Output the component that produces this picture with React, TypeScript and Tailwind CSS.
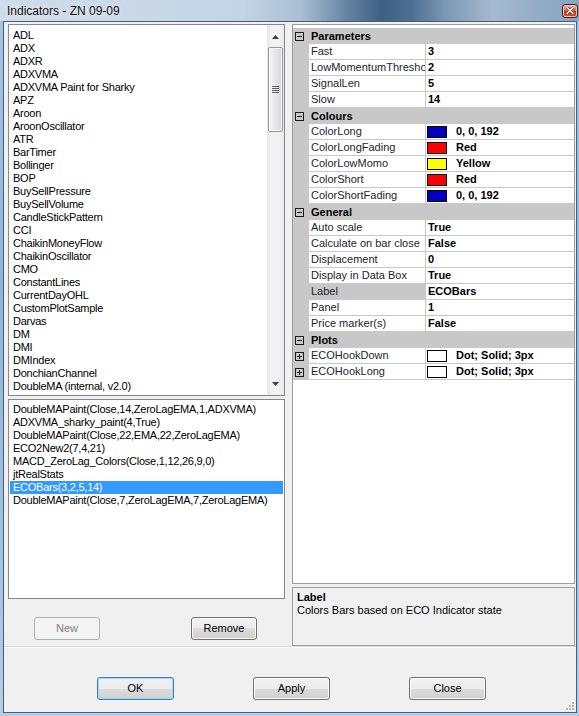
import React from 'react';

const INDICATORS = [
  'ADL',
  'ADX',
  'ADXR',
  'ADXVMA',
  'ADXVMA Paint for Sharky',
  'APZ',
  'Aroon',
  'AroonOscillator',
  'ATR',
  'BarTimer',
  'Bollinger',
  'BOP',
  'BuySellPressure',
  'BuySellVolume',
  'CandleStickPattern',
  'CCI',
  'ChaikinMoneyFlow',
  'ChaikinOscillator',
  'CMO',
  'ConstantLines',
  'CurrentDayOHL',
  'CustomPlotSample',
  'Darvas',
  'DM',
  'DMI',
  'DMIndex',
  'DonchianChannel',
  'DoubleMA (internal, v2.0)'
];

const APPLIED = [
  'DoubleMAPaint(Close,14,ZeroLagEMA,1,ADXVMA)',
  'ADXVMA_sharky_paint(4,True)',
  'DoubleMAPaint(Close,22,EMA,22,ZeroLagEMA)',
  'ECO2New2(7,4,21)',
  'MACD_ZeroLag_Colors(Close,1,12,26,9,0)',
  'jtRealStats',
  'ECOBars(3,2,5,14)',
  'DoubleMAPaint(Close,7,ZeroLagEMA,7,ZeroLagEMA)'
];
const SELECTED_APPLIED = 6;

interface Prop {
  name: string;
  value: string;
  swatch?: string;
  selected?: boolean;
  expandable?: boolean;
}

const SECTIONS: { title: string; rows: Prop[] }[] = [
  {
    title: 'Parameters',
    rows: [
      { name: 'Fast', value: '3' },
      { name: 'LowMomentumThreshold', value: '2' },
      { name: 'SignalLen', value: '5' },
      { name: 'Slow', value: '14' }
    ]
  },
  {
    title: 'Colours',
    rows: [
      { name: 'ColorLong', value: '0, 0, 192', swatch: 'bg-[#0000c0]' },
      { name: 'ColorLongFading', value: 'Red', swatch: 'bg-[#ff0000]' },
      { name: 'ColorLowMomo', value: 'Yellow', swatch: 'bg-[#ffff00]' },
      { name: 'ColorShort', value: 'Red', swatch: 'bg-[#ff0000]' },
      { name: 'ColorShortFading', value: '0, 0, 192', swatch: 'bg-[#0000c0]' }
    ]
  },
  {
    title: 'General',
    rows: [
      { name: 'Auto scale', value: 'True' },
      { name: 'Calculate on bar close', value: 'False' },
      { name: 'Displacement', value: '0' },
      { name: 'Display in Data Box', value: 'True' },
      { name: 'Label', value: 'ECOBars', selected: true },
      { name: 'Panel', value: '1' },
      { name: 'Price marker(s)', value: 'False' }
    ]
  },
  {
    title: 'Plots',
    rows: [
      { name: 'ECOHookDown', value: 'Dot; Solid; 3px', swatch: 'bg-white', expandable: true },
      { name: 'ECOHookLong', value: 'Dot; Solid; 3px', swatch: 'bg-white', expandable: true }
    ]
  }
];

function ExpandBox({ plus }: { plus?: boolean }) {
  return (
    <svg width="9" height="9" viewBox="0 0 9 9" className="shrink-0">
      <rect x="0.5" y="0.5" width="8" height="8" fill="none" stroke="#1a1a1a" />
      <line x1="2" y1="4.5" x2="7" y2="4.5" stroke="#1a1a1a" />
      {plus ? <line x1="4.5" y1="2" x2="4.5" y2="7" stroke="#1a1a1a" /> : null}
    </svg>
  );
}

function Arrow({ up }: { up?: boolean }) {
  return (
    <svg width="7" height="4" viewBox="0 0 7 4">
      <polygon points={up ? '3.5,0 7,4 0,4' : '0,0 7,0 3.5,4'} fill="#404040" />
    </svg>
  );
}

function ScrollBar() {
  return (
    <div className="w-[17px] shrink-0 flex flex-col bg-[linear-gradient(90deg,#e6e6e6,#f2f2f2_25%,#f2f2f2_75%,#eaeaea)]">
      <div className="h-[22px] flex items-center justify-center pt-[2px]">
        <Arrow up />
      </div>
      <div className="h-[85px] mx-[1px] rounded-[2px] border border-[#979797] bg-[linear-gradient(90deg,#f4f4f4,#e9e9e9_45%,#d6d6d6)] shadow-[inset_0_0_0_1px_#fafafa] flex items-center justify-center">
        <svg width="7" height="8" viewBox="0 0 7 8">
          <line x1="0" y1="0.5" x2="7" y2="0.5" stroke="#606060" />
          <line x1="0" y1="2.5" x2="7" y2="2.5" stroke="#606060" />
          <line x1="0" y1="4.5" x2="7" y2="4.5" stroke="#606060" />
          <line x1="0" y1="6.5" x2="7" y2="6.5" stroke="#606060" />
        </svg>
      </div>
      <div className="flex-1" />
      <div className="h-[22px] flex items-center justify-center">
        <Arrow />
      </div>
    </div>
  );
}

function WinButton({ label, w, kind = 'normal' }: { label: string; w: string; kind?: 'normal' | 'default' | 'disabled' }) {
  const look =
    kind === 'disabled'
      ? 'border-[#adb2b5] bg-[#f4f4f4] text-[#838383]'
      : kind === 'default'
        ? 'border-[#3c7fb1] bg-[linear-gradient(#f2f2f2_0%,#ebebeb_50%,#dddddd_50%,#cfcfcf_100%)] shadow-[inset_0_0_0_1px_#9fdcf7] text-black'
        : 'border-[#707070] bg-[linear-gradient(#f2f2f2_0%,#ebebeb_50%,#dddddd_50%,#cfcfcf_100%)] shadow-[inset_0_0_0_1px_#fcfcfc] text-black';
  return (
    <button
      className={`h-[23px] ${w} shrink-0 rounded-[3px] border flex items-center justify-center text-[11px] leading-none ${look}`}
      type="button"
    >
      {label}
    </button>
  );
}

function PropertyGrid() {
  return (
    <div className="h-[560px] border border-[#9a9a9a] bg-white pt-[3px] overflow-hidden">
      {SECTIONS.map((s) => (
        <div key={s.title}>
          <div className="h-[16px] flex items-center bg-[#c8c8c8] pl-[2px]">
            <ExpandBox />
            <span className="ml-[7px] font-bold leading-[16px]">{s.title}</span>
          </div>
          {s.rows.map((r) => (
            <div className="h-[16px] flex" key={r.name}>
              <div className="w-[16px] shrink-0 bg-[#c8c8c8] flex items-center pl-[2px]">
                {r.expandable ? <ExpandBox plus /> : null}
              </div>
              <div
                className={`w-[117px] shrink-0 border-r border-b border-[#c8c8c8] pl-[2px] overflow-hidden whitespace-nowrap leading-[15px] text-[#1c2436] ${
                  r.selected ? 'bg-[#c8c8c8]' : 'bg-white'
                }`}
              >
                {r.name}
              </div>
              <div className="flex-1 border-b border-[#c8c8c8] flex items-center whitespace-nowrap">
                {r.swatch ? (
                  <>
                    <span className={`ml-[1px] w-[20px] h-[12px] border border-black shrink-0 ${r.swatch}`} />
                    <span className="ml-[9px] font-bold leading-[15px]">{r.value}</span>
                  </>
                ) : (
                  <span className="pl-[2px] font-bold leading-[15px]">{r.value}</span>
                )}
              </div>
            </div>
          ))}
        </div>
      ))}
    </div>
  );
}

export default function App() {
  return (
    <div className="w-[579px] h-[716px] flex flex-col bg-[linear-gradient(180deg,#a9c6e4,#8db4dc_40%,#9cc0e2_70%,#b4cde6)] font-['Liberation_Sans',Arial,sans-serif] text-[11px] text-black select-none">
      <div className="h-[21px] shrink-0 flex items-center justify-between pl-[7px] pr-[1px] bg-[linear-gradient(90deg,#d0dcea_0%,#c4d4e4_42%,#a9bed3_52%,#6583a3_60%,#3e5f81_66%,#4f6f90_71%,#7c98b4_77%,#a5bacf_85%,#93adc6_93%,#88a4c0_100%)]">
        <span className="text-[12px] leading-none text-[#111] [text-shadow:0_0_6px_#ffffff]">Indicators - ZN 09-09</span>
        <div className="w-[16px] h-[14px] rounded-[3px] border border-[#4e1c13] bg-[linear-gradient(#eab0a2_0%,#d9715a_45%,#c2381c_55%,#d0553a_100%)] shadow-[inset_0_0_0_1px_#f1c3b8] flex items-center justify-center">
          <svg width="8" height="7" viewBox="0 0 8 7">
            <path d="M1 0.5 L7 6.5 M7 0.5 L1 6.5" stroke="#5a2418" strokeWidth="2.6" strokeLinecap="round" />
            <path d="M1 0.5 L7 6.5 M7 0.5 L1 6.5" stroke="#ffffff" strokeWidth="1.5" strokeLinecap="round" />
          </svg>
        </div>
      </div>

      <div className="ml-[3px] mr-[2px] h-[692px] shrink-0 border border-[#4a5c70] bg-[#f0f0f0] flex flex-col">
        <div className="h-[624px] shrink-0 flex pt-[2px] pl-[4px] pr-[1px] gap-[7px]">
          <div className="w-[277px] shrink-0 flex flex-col">
            <div className="h-[372px] shrink-0 border border-[#828790] bg-white flex">
              <div className="flex-1 pt-[4px] overflow-hidden">
                {INDICATORS.map((name) => (
                  <div className="h-[13px] pl-[4px] leading-[13px] whitespace-nowrap tracking-[-0.25px]" key={name}>
                    {name}
                  </div>
                ))}
              </div>
              <ScrollBar />
            </div>
            <div className="mt-[3px] h-[200px] shrink-0 border border-[#828790] bg-white pt-[3px] overflow-hidden">
              {APPLIED.map((name, i) => (
                <div
                  className={`h-[13px] mx-[1px] pl-[3px] leading-[13px] whitespace-nowrap tracking-[-0.25px] ${
                    i === SELECTED_APPLIED ? 'bg-[#3399ff] text-white' : ''
                  }`}
                  key={name}
                >
                  {name}
                </div>
              ))}
            </div>
            <div className="mt-[18px] flex pl-[26px] gap-[91px]">
              <WinButton kind="disabled" label="New" w="w-[66px]" />
              <WinButton label="Remove" w="w-[66px]" />
            </div>
          </div>

          <div className="w-[283px] shrink-0 flex flex-col">
            <PropertyGrid />
            <div className="mt-[3px] h-[59px] shrink-0 border border-[#a0a0a0] bg-[#f0f0f0] pl-[4px] pt-[3px]">
              <div className="font-bold leading-[13px]">Label</div>
              <div className="leading-[13px]">Colors Bars based on ECO Indicator state</div>
            </div>
          </div>
        </div>

        <div className="h-[2px] shrink-0 border-t border-[#d8d8d8] border-b border-b-white" />

        <div className="relative flex-1 flex pt-[29px] pl-[93px] gap-[79px]">
          <WinButton kind="default" label="OK" w="w-[77px]" />
          <WinButton label="Apply" w="w-[77px]" />
          <WinButton label="Close" w="w-[77px]" />
          <svg className="absolute right-[1px] bottom-[1px]" width="10" height="10" viewBox="0 0 10 10">
            <rect x="7" y="1" width="2" height="2" fill="#b8b8b8" />
            <rect x="4" y="4" width="2" height="2" fill="#b8b8b8" />
            <rect x="7" y="4" width="2" height="2" fill="#b8b8b8" />
            <rect x="1" y="7" width="2" height="2" fill="#b8b8b8" />
            <rect x="4" y="7" width="2" height="2" fill="#b8b8b8" />
            <rect x="7" y="7" width="2" height="2" fill="#b8b8b8" />
          </svg>
        </div>
      </div>
    </div>
  );
}
